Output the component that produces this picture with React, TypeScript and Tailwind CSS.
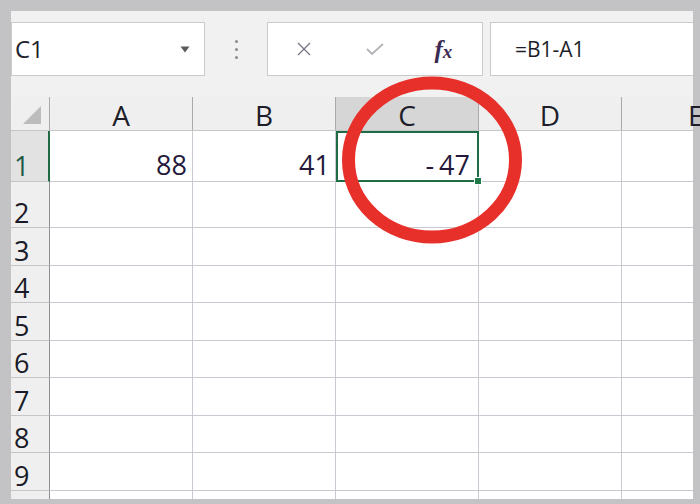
import React from "react";

const rows: { n: string; h: string }[] = [
  { n: "2", h: "h-[46px]" },
  { n: "3", h: "h-[38px]" },
  { n: "4", h: "h-[37px]" },
  { n: "5", h: "h-[38px]" },
  { n: "6", h: "h-[37px]" },
  { n: "7", h: "h-[38px]" },
  { n: "8", h: "h-[37px]" },
  { n: "9", h: "h-[38px]" },
];

const font = { fontFamily: '"Open Sans", "Noto Sans", "Liberation Sans", sans-serif' };

function EmptyCells() {
  return (
    <>
      <div className="border-r border-b border-[#c9c9d1] bg-white" />
      <div className="border-r border-b border-[#c9c9d1] bg-white" />
      <div className="border-r border-b border-[#c9c9d1] bg-white" />
      <div className="border-r border-b border-[#c9c9d1] bg-white" />
      <div className="border-b border-[#c9c9d1] bg-white" />
    </>
  );
}

export default function App() {
  return (
    <div
      className="relative w-[700px] h-[504px] overflow-hidden bg-[#c3c3c5] pt-[11px] pl-[11px] pr-[7px] pb-[5px]"
      style={font}
    >
      <div className="flex flex-col h-full bg-[#f1f1f1]">
        {/* toolbar */}
        <div className="flex items-start h-[86px] pt-[11px]">
          <div className="flex items-center justify-between w-[194px] h-[54px] bg-white border border-[#cacaca] pl-[3px] pr-[14px]">
            <span className="text-[24px] text-[#1e1e2a] leading-none">C1</span>
            <svg width="10" height="7" viewBox="0 0 10 7">
              <path d="M0.5 0.5 L9.5 0.5 L5 6.5 Z" fill="#5a5a5a" />
            </svg>
          </div>
          <div className="flex flex-col items-center justify-center gap-[5px] w-[62px] h-[54px]">
            <div className="w-[3px] h-[3px] rounded-full bg-[#8a8a8a]" />
            <div className="w-[3px] h-[3px] rounded-full bg-[#8a8a8a]" />
            <div className="w-[3px] h-[3px] rounded-full bg-[#8a8a8a]" />
          </div>
          <div className="flex items-center w-[216px] h-[54px] bg-white border border-[#cacaca]">
            <div className="flex items-center justify-center w-[72px]">
              <svg width="16" height="16" viewBox="0 0 16 16">
                <path d="M2 2 L14 14 M14 2 L2 14" stroke="#7a7484" strokeWidth="1.3" fill="none" />
              </svg>
            </div>
            <div className="flex items-center justify-center w-[72px]">
              <svg width="22" height="16" viewBox="0 0 22 16">
                <path d="M3 8 L8 13 L19 3" stroke="#b4b4b8" strokeWidth="1.8" fill="none" />
              </svg>
            </div>
            <div className="flex items-center justify-center w-[72px] pr-[6px]">
              <span
                className="italic font-bold text-[25px] leading-none text-[#3c2a52]"
                style={{ fontFamily: '"Liberation Serif", "DejaVu Serif", serif' }}
              >
                f<span className="text-[19px]">x</span>
              </span>
            </div>
          </div>
          <div className="flex items-center flex-1 ml-[7px] h-[54px] bg-white border border-[#cacaca] border-r-0 pl-[24px]">
            <span className="text-[21px] text-[#1e1e2a] leading-none">=B1-A1</span>
          </div>
        </div>

        {/* header row */}
        <div className="grid grid-cols-[39px_143px_143px_143px_143px_1fr] h-[34px] bg-[#efefef] border-b border-[#c6c6c8]">
          <div className="flex items-end justify-end pr-[7px] pb-[5px] border-r border-[#a9a9ab]">
            <svg width="20" height="20" viewBox="0 0 20 20">
              <path d="M19 1 L19 19 L1 19 Z" fill="#bcbcbc" />
            </svg>
          </div>
          <div className="flex items-end justify-center border-r border-[#a9a9ab] text-[28px] leading-none text-[#1e1e2a] pb-[1px]">A</div>
          <div className="flex items-end justify-center border-r border-[#a9a9ab] text-[28px] leading-none text-[#1e1e2a] pb-[1px]">B</div>
          <div className="flex items-end justify-center bg-[#d6d6d6] border-r border-[#a9a9ab] text-[28px] leading-none text-[#1e1e2a] pb-[1px]">C</div>
          <div className="flex items-end justify-center border-r border-[#a9a9ab] text-[28px] leading-none text-[#1e1e2a] pb-[1px]">D</div>
          <div className="flex items-end justify-start pl-[66px] text-[28px] leading-none text-[#1e1e2a] pb-[1px]">E</div>
        </div>

        {/* row 1 */}
        <div className="grid grid-cols-[39px_143px_143px_143px_143px_1fr] h-[51px]">
          <div className="flex items-end pl-[3px] pb-[2px] bg-[#e2e2e2] border-r-[2px] border-r-[#1f6b45] border-b border-b-[#c6c6c8] text-[27px] leading-none text-[#1d5a48]">
            1
          </div>
          <div className="flex items-end justify-end pr-[5px] pb-[3px] bg-white border-r border-b border-[#c9c9d1] text-[27px] leading-none text-[#24193a]">
            88
          </div>
          <div className="flex items-end justify-end pr-[5px] pb-[3px] bg-white border-r border-b border-[#c9c9d1] text-[27px] leading-none text-[#24193a]">
            41
          </div>
          <div className="relative flex items-end justify-end pr-[7px] pb-[2px] bg-white border-[2px] border-[#1f6b45] text-[27px] leading-none text-[#24193a]">
            <span className="mr-[5px]">-</span>
            <span>47</span>
            <div className="absolute right-[-5px] bottom-[-5px] w-[8px] h-[8px] bg-[#1f7a4a] border border-white" />
          </div>
          <div className="border-r border-b border-[#c9c9d1] bg-white" />
          <div className="border-b border-[#c9c9d1] bg-white" />
        </div>

        {rows.map((r) => (
          <div key={r.n} className={`grid grid-cols-[39px_143px_143px_143px_143px_1fr] ${r.h}`}>
            <div className="flex items-end pl-[3px] pb-[1px] bg-[#efefef] border-r border-r-[#8e8e90] border-b border-b-[#c6c6c8] text-[27px] leading-none text-[#1a1a28]">
              {r.n}
            </div>
            <EmptyCells />
          </div>
        ))}
        <div className="grid grid-cols-[39px_143px_143px_143px_143px_1fr] flex-1">
          <div className="bg-[#efefef] border-r border-[#8e8e90]" />
          <div className="border-r border-[#c9c9d1] bg-white" />
          <div className="border-r border-[#c9c9d1] bg-white" />
          <div className="border-r border-[#c9c9d1] bg-white" />
          <div className="border-r border-[#c9c9d1] bg-white" />
          <div className="bg-white" />
        </div>
      </div>

      {/* red circle annotation */}
      <svg className="absolute left-0 top-0 pointer-events-none" width="700" height="504" viewBox="0 0 700 504">
        <ellipse cx="432" cy="160" rx="83.5" ry="77" fill="none" stroke="#e8302b" strokeWidth="13" />
      </svg>
    </div>
  );
}
